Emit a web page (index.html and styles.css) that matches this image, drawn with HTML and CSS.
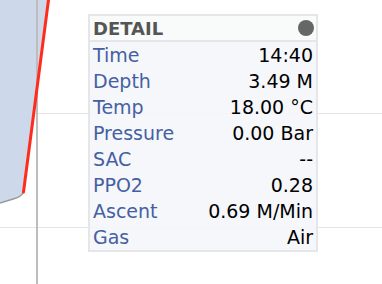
FILE: index.html
```html
<!DOCTYPE html>
<html lang="en">
<head>
    <meta charset="UTF-8">
    <meta name="viewport" content="width=device-width, initial-scale=1.0">
    <title>Dive Profile</title>
    <link rel="stylesheet" href="styles.css">
</head>
<body>

    <div class="chart">
        <svg class="profile" width="382" height="284" viewBox="0 0 382 284">
            <line x1="0" y1="113.5" x2="382" y2="113.5" stroke="#e3e3e3" stroke-width="1"/>
            <line x1="0" y1="227.5" x2="382" y2="227.5" stroke="#e3e3e3" stroke-width="1"/>
            <path d="M0 0 L48.5 0 L23.5 192 Q21 197 14 198.8 L0 203 Z" fill="#cdd8ea"/>
            <path d="M23.5 192 Q21 197 14 198.8 L0 203" fill="none" stroke="#9a9a9a" stroke-width="1.5"/>
            <line x1="37" y1="0" x2="37" y2="284" stroke="#bdbdbd" stroke-width="2"/>
            <line x1="49" y1="-4" x2="23.5" y2="192" stroke="#ff2b1c" stroke-width="3" stroke-linecap="round"/>
        </svg>

        <div class="detail">
            <div class="detail-head">
                <span>DETAIL</span>
                <span class="dot"></span>
            </div>
            <div class="row"><span class="label">Time</span><span class="value">14:40</span></div>
            <div class="row"><span class="label">Depth</span><span class="value">3.49 M</span></div>
            <div class="row"><span class="label">Temp</span><span class="value">18.00 °C</span></div>
            <div class="row"><span class="label">Pressure</span><span class="value">0.00 Bar</span></div>
            <div class="row"><span class="label">SAC</span><span class="value">--</span></div>
            <div class="row"><span class="label">PPO2</span><span class="value">0.28</span></div>
            <div class="row"><span class="label">Ascent</span><span class="value">0.69 M/Min</span></div>
            <div class="row"><span class="label">Gas</span><span class="value">Air</span></div>
        </div>
    </div>

</body>
</html>
```

FILE: styles.css
```css
body {
    margin: 0;
    background: #ffffff;
    font-family: "DejaVu Sans", "Liberation Sans", sans-serif;
}
.chart {
    position: relative;
    width: 382px;
    height: 284px;
    overflow: hidden;
}
.profile {
    display: block;
}
.detail {
    position: absolute;
    left: 88px;
    top: 14px;
    width: 226px;
    border: 2px solid #e4e6e9;
    background: rgba(244, 246, 250, 0.88);
}
.detail-head {
    display: flex;
    justify-content: space-between;
    align-items: center;
    height: 24px;
    padding: 0 2px 0 3px;
    background: rgba(250, 250, 250, 0.9);
    border-bottom: 2px solid #e4e6e9;
    font-weight: bold;
    font-size: 18px;
    color: #555555;
}
.dot {
    width: 16px;
    height: 16px;
    border-radius: 50%;
    background: #666666;
}
.row {
    display: flex;
    justify-content: space-between;
    align-items: center;
    height: 26px;
    padding: 0 3px;
    font-size: 19px;
}
.label {
    color: #4560a2;
}
.value {
    color: #000000;
}
```
